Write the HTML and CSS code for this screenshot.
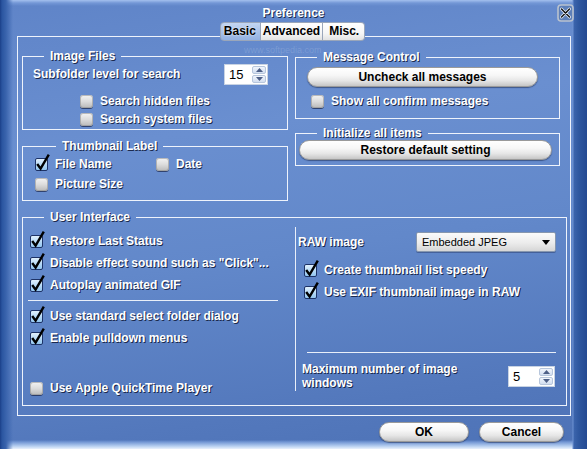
FILE: index.html
```html
<!DOCTYPE html>
<html>
<head>
<meta charset="utf-8">
<title>Preference</title>
<link rel="stylesheet" href="styles.css">
</head>
<body>
<svg class="defs" width="0" height="0">
  <defs>
    <linearGradient id="cbg" x1="0" y1="0" x2="0" y2="1">
      <stop offset="0" stop-color="#e4f2fd"/>
      <stop offset="1" stop-color="#8fc4f0"/>
    </linearGradient>
  </defs>
</svg>
<div class="window">
  <div class="watermark">www.softpedia.com</div>
  <div class="titlebar">
    <span></span>
    <div class="title">Preference</div>
    <div class="close">
      <svg width="17" height="18" viewBox="0 0 17 18">
        <rect x="1" y="1" width="15" height="16" rx="3" fill="#5d7fb8" stroke="#b9c2cf" stroke-width="1.6"/>
        <path d="M4.5 5 L12.5 13 M12.5 5 L4.5 13" stroke="#e8eef8" stroke-width="3" stroke-linecap="round"/>
        <path d="M4.5 5 L12.5 13 M12.5 5 L4.5 13" stroke="#111" stroke-width="1.4" stroke-linecap="round"/>
      </svg>
    </div>
  </div>
  <div class="tabs">
    <div class="tab sel">Basic</div><div class="tab">Advanced</div><div class="tab last">Misc.</div>
  </div>
  <div class="frame">
    <div class="col">
      <fieldset class="grp g-img">
        <legend>Image Files</legend>
        <div class="row r-sub">
          <span class="lbl">Subfolder level for search</span>
          <div class="spin s15">
            <span class="spin-val">15</span>
            <span class="spin-btns">
              <span class="sb"><svg width="7" height="4" viewBox="0 0 7 4"><path d="M0 4 L3.5 0 L7 4Z" fill="#4d5f86"/></svg></span>
              <span class="sb"><svg width="7" height="4" viewBox="0 0 7 4"><path d="M0 0 L3.5 4 L7 0Z" fill="#4d5f86"/></svg></span>
            </span>
          </div>
        </div>
        <div class="cbrow r-hid"><span class="box"></span><span>Search hidden files</span></div>
        <div class="cbrow r-sys"><span class="box"></span><span>Search system files</span></div>
      </fieldset>
      <fieldset class="grp g-thumb">
        <legend>Thumbnail Label</legend>
        <div class="thumb-grid">
          <div class="cbrow2">
            <svg class="chk" width="13" height="13" viewBox="0 0 13 13" overflow="visible"><rect x="0.5" y="0.5" width="12" height="12" rx="1.5" fill="url(#cbg)" stroke="#1d3266"/><path d="M2.2 6 L5.6 10.6 L13.8 -3.4" fill="none" stroke="#000" stroke-width="2.4"/></svg>
            <span>File Name</span>
          </div>
          <div class="cbrow2"><span class="box"></span><span>Date</span></div>
          <div class="cbrow2"><span class="box"></span><span>Picture Size</span></div>
        </div>
      </fieldset>
    </div>
    <div class="col">
      <fieldset class="grp g-msg">
        <legend>Message Control</legend>
        <div class="pill p-uncheck">Uncheck all messages</div>
        <div class="cbrow r-conf"><span class="box"></span><span>Show all confirm messages</span></div>
      </fieldset>
      <fieldset class="grp g-init">
        <legend>Initialize all items</legend>
        <div class="pill p-restore">Restore default setting</div>
      </fieldset>
    </div>
    <fieldset class="grp g-ui">
      <legend>User Interface</legend>
      <div class="ui-grid">
        <div class="ui-left">
          <div class="uirow first">
            <svg class="chk" width="13" height="13" viewBox="0 0 13 13" overflow="visible"><rect x="0.5" y="0.5" width="12" height="12" rx="1.5" fill="url(#cbg)" stroke="#1d3266"/><path d="M2.2 6 L5.6 10.6 L13.8 -3.4" fill="none" stroke="#000" stroke-width="2.4"/></svg>
            <span>Restore Last Status</span>
          </div>
          <div class="uirow">
            <svg class="chk" width="13" height="13" viewBox="0 0 13 13" overflow="visible"><rect x="0.5" y="0.5" width="12" height="12" rx="1.5" fill="url(#cbg)" stroke="#1d3266"/><path d="M2.2 6 L5.6 10.6 L13.8 -3.4" fill="none" stroke="#000" stroke-width="2.4"/></svg>
            <span>Disable effect sound such as "Click"...</span>
          </div>
          <div class="uirow">
            <svg class="chk" width="13" height="13" viewBox="0 0 13 13" overflow="visible"><rect x="0.5" y="0.5" width="12" height="12" rx="1.5" fill="url(#cbg)" stroke="#1d3266"/><path d="M2.2 6 L5.6 10.6 L13.8 -3.4" fill="none" stroke="#000" stroke-width="2.4"/></svg>
            <span>Autoplay animated GIF</span>
          </div>
          <div class="sep sep-left"></div>
          <div class="uirow after-sep">
            <svg class="chk" width="13" height="13" viewBox="0 0 13 13" overflow="visible"><rect x="0.5" y="0.5" width="12" height="12" rx="1.5" fill="url(#cbg)" stroke="#1d3266"/><path d="M2.2 6 L5.6 10.6 L13.8 -3.4" fill="none" stroke="#000" stroke-width="2.4"/></svg>
            <span>Use standard select folder dialog</span>
          </div>
          <div class="uirow">
            <svg class="chk" width="13" height="13" viewBox="0 0 13 13" overflow="visible"><rect x="0.5" y="0.5" width="12" height="12" rx="1.5" fill="url(#cbg)" stroke="#1d3266"/><path d="M2.2 6 L5.6 10.6 L13.8 -3.4" fill="none" stroke="#000" stroke-width="2.4"/></svg>
            <span>Enable pulldown menus</span>
          </div>
          <div class="uirow qt"><span class="box"></span><span>Use Apple QuickTime Player</span></div>
        </div>
        <div class="vline"></div>
        <div class="ui-right">
          <div class="row r-raw">
            <span class="lbl">RAW image</span>
            <div class="dd">
              <span>Embedded JPEG</span>
              <svg width="8" height="5" viewBox="0 0 8 5"><path d="M0 0 L8 0 L4 5Z" fill="#000"/></svg>
            </div>
          </div>
          <div class="uirow r-create">
            <svg class="chk" width="13" height="13" viewBox="0 0 13 13" overflow="visible"><rect x="0.5" y="0.5" width="12" height="12" rx="1.5" fill="url(#cbg)" stroke="#1d3266"/><path d="M2.2 6 L5.6 10.6 L13.8 -3.4" fill="none" stroke="#000" stroke-width="2.4"/></svg>
            <span>Create thumbnail list speedy</span>
          </div>
          <div class="uirow r-exif">
            <svg class="chk" width="13" height="13" viewBox="0 0 13 13" overflow="visible"><rect x="0.5" y="0.5" width="12" height="12" rx="1.5" fill="url(#cbg)" stroke="#1d3266"/><path d="M2.2 6 L5.6 10.6 L13.8 -3.4" fill="none" stroke="#000" stroke-width="2.4"/></svg>
            <span>Use EXIF thumbnail image in RAW</span>
          </div>
          <div class="sep sep-right"></div>
          <div class="row r-max">
            <span class="maxlbl">Maximum number of image windows</span>
            <div class="spin s5">
              <span class="spin-val">5</span>
              <span class="spin-btns">
                <span class="sb"><svg width="7" height="4" viewBox="0 0 7 4"><path d="M0 4 L3.5 0 L7 4Z" fill="#4d5f86"/></svg></span>
                <span class="sb"><svg width="7" height="4" viewBox="0 0 7 4"><path d="M0 0 L3.5 4 L7 0Z" fill="#4d5f86"/></svg></span>
              </span>
            </div>
          </div>
        </div>
      </div>
    </fieldset>
  </div>
  <div class="actions">
    <div class="pill p-ok">OK</div>
    <div class="pill p-cancel">Cancel</div>
  </div>
</div>
</body>
</html>
```
FILE: styles.css
```css
* { box-sizing: border-box; }
html, body { margin: 0; padding: 0; }
body {
  width: 587px;
  height: 449px;
  overflow: hidden;
  font-family: "Liberation Sans", Arial, sans-serif;
  font-size: 12px;
  background: #4f74b8;
}
.defs { position: absolute; width: 0; height: 0; }

.window {
  position: relative;
  width: 587px;
  height: 449px;
  display: flex;
  flex-direction: column;
  color: #fff;
  font-weight: bold;
  text-shadow: 1px 1px 0 rgba(18, 28, 60, 0.9);
  background:
    linear-gradient(to right, #1b3f88 0px, #2a55a0 2px, #3a64ad 6px, rgba(74, 112, 182, 0) 13px),
    linear-gradient(to left, #244a92 0px, #2e579f 8px, #3b64ac 13px, #6d92d2 14px, rgba(90, 128, 196, 0) 15px),
    linear-gradient(to top, #eaf2fd 0px, #b4cdef 3px, #7397d4 7px, rgba(90, 128, 196, 0) 9px),
    linear-gradient(to bottom, #a4c0ee 0px, #7397d6 3px, rgba(110, 146, 210, 0) 6px),
    linear-gradient(172deg, #5f84c8 0%, #6a8fd0 30%, #6288ca 55%, #5378bc 85%, #4d72b6 100%);
}

.watermark {
  position: absolute;
  left: 244px;
  top: 45px;
  font-size: 9px;
  font-weight: normal;
  color: rgba(255, 255, 255, 0.16);
  text-shadow: none;
}

.titlebar {
  height: 22px;
  display: grid;
  grid-template-columns: 1fr auto 1fr;
}
.title {
  line-height: 22px;
  padding-top: 2px;
  text-align: center;
}
.close {
  justify-self: end;
  align-self: start;
  margin: 4px 13px 0 0;
  width: 17px;
  height: 18px;
}
.close svg { display: block; }

.tabs {
  display: flex;
  justify-content: center;
  margin-bottom: -5px;
  margin-left: -2px;
  position: relative;
  z-index: 1;
  height: 19px;
}
.tab {
  height: 19px;
  line-height: 17px;
  color: #000;
  text-shadow: none;
  padding: 0 2px;
  border: 1px solid #9aa6ba;
  border-left: none;
  background: linear-gradient(#ffffff, #f6f6f6 60%, #e2e2e2);
}
.tab.sel {
  border-left: 1px solid #9aa6ba;
  border-radius: 4px 0 0 4px;
  padding: 0 4px 0 3px;
  background: linear-gradient(#c4d6f2, #a5bfe8 60%, #93b1e2);
  text-shadow: 0 0 2px #fff;
}
.tab.last {
  border-radius: 0 4px 4px 0;
  padding: 0 5px 0 6px;
}

.frame {
  margin-left: 17px;
  width: 554px;
  height: 380px;
  border: 1px solid #eef3fc;
  padding: 12px 3px 0 4px;
  display: grid;
  grid-template-columns: 266px 265px;
  column-gap: 7px;
  row-gap: 9px;
  align-content: start;
}
.col { display: flex; flex-direction: column; }

.grp {
  margin: 0;
  padding: 0;
  border: 1px solid #eef3fc;
  min-width: 0;
}
.grp > legend {
  margin-left: 21px;
  padding: 0 6px;
  height: 14px;
  line-height: 14px;
}

.row { display: flex; align-items: center; }
.lbl { white-space: nowrap; }

.box {
  flex: none;
  width: 13px;
  height: 13px;
  border-radius: 3px;
  background: linear-gradient(#f4f4f4, #dcdcdc 50%, #b9b9b9);
  box-shadow: 0 1px 0 rgba(24, 34, 70, 0.7), inset 0 0 0 1px rgba(140, 140, 140, 0.55);
}
.chk { flex: none; display: block; }

.cbrow {
  height: 18px;
  display: flex;
  align-items: center;
  gap: 7px;
}

/* Image Files */
.grp.g-img { padding-bottom: 1px; }
.r-sub { height: 22px; padding-left: 10px; }
.r-sub .spin { margin-left: auto; margin-right: 19px; }
.r-hid { margin-top: 7px; padding-left: 57px; }
.r-sys { padding-left: 57px; }

/* Thumbnail */
.grp.g-thumb { margin-top: 9px; padding: 1px 0 6px 12px; }
.thumb-grid {
  display: grid;
  grid-template-columns: 121px auto;
  grid-auto-rows: 20px;
}
.cbrow2 { display: flex; align-items: center; gap: 7px; }

/* Message control */
.grp.g-msg { margin-top: 1px; padding: 3px 0 8px 0; }
.p-uncheck { margin-left: 11px; width: 231px; }
.r-conf { margin-top: 5px; padding-left: 15px; }

.grp.g-init { margin-top: 7px; padding: 0 0 5px 0; }
.p-restore { margin-left: 3px; width: 253px; }

/* pill buttons */
.pill {
  height: 20px;
  border-radius: 10px;
  border: 1px solid #9a9a9a;
  background: linear-gradient(#ffffff 0%, #f7f7f7 40%, #e6e6e6 70%, #c6c6c6 100%);
  color: #000;
  text-shadow: none;
  text-align: center;
  line-height: 18px;
  box-shadow: 0 1px 1px rgba(10, 20, 50, 0.45);
}

/* spin boxes */
.spin {
  flex: none;
  height: 21px;
  display: flex;
  background: #fff;
  border: 1px solid #c8d3e3;
  color: #000;
  text-shadow: none;
  font-weight: normal;
  font-size: 13px;
}
.s15 { width: 44px; }
.s5 { width: 47px; }
.spin-val { flex: 1; padding-left: 4px; line-height: 19px; }
.spin-btns {
  width: 15px;
  display: flex;
  flex-direction: column;
  gap: 1px;
  padding: 1px 1px 1px 0;
}
.sb {
  flex: 1;
  display: flex;
  align-items: center;
  justify-content: center;
  border: 1px solid #b7c6dc;
  border-radius: 2px;
  background: linear-gradient(#f1f5fc, #d2def0);
}
.sb svg { display: block; }

/* User interface */
.grp.g-ui { grid-column: 1 / 3; width: 545px; padding-bottom: 6px; }
.ui-grid {
  display: grid;
  grid-template-columns: 272px 1px 1fr;
}
.ui-left { display: flex; flex-direction: column; padding-left: 7px; padding-top: 6px; }
.uirow {
  height: 22px;
  display: flex;
  align-items: center;
  gap: 7px;
  white-space: nowrap;
}
.sep { height: 1px; background: #e9eff9; }
.sep-left { margin: 4px 17px 0 -2px; }
.uirow.after-sep { margin-top: 4px; }
.uirow.qt { margin-top: 28px; }

.vline {
  background: #e9eff9;
  margin: 3px 0 8px 0;
}

.ui-right { display: flex; flex-direction: column; padding-top: 8px; }
.r-raw { height: 20px; padding-left: 2px; }
.dd {
  margin-left: auto;
  margin-right: 10px;
  width: 140px;
  height: 20px;
  border: 1px solid #8797ae;
  border-radius: 2px;
  background: linear-gradient(#fbfbfb, #ececec 55%, #d6d6d6);
  display: flex;
  align-items: center;
  justify-content: space-between;
  padding: 0 5px 0 5px;
  color: #000;
  text-shadow: none;
  font-weight: normal;
  font-size: 11px;
  box-shadow: 0 1px 0 rgba(20, 30, 70, 0.35);
}
.dd svg { display: block; }
.r-create { margin-top: 7px; padding-left: 8px; }
.r-exif { padding-left: 8px; }
.sep-right { margin: 49px 10px 0 11px; }
.r-max { margin-top: 9px; height: 28px; padding-left: 6px; }
.maxlbl { width: 180px; line-height: 14px; }
.r-max .spin { margin-left: auto; margin-right: 11px; }

/* bottom actions */
.actions {
  display: flex;
  justify-content: flex-end;
  gap: 10px;
  margin-top: 6px;
  padding-right: 23px;
}
.p-ok { width: 90px; }
.p-cancel { width: 85px; }
```
